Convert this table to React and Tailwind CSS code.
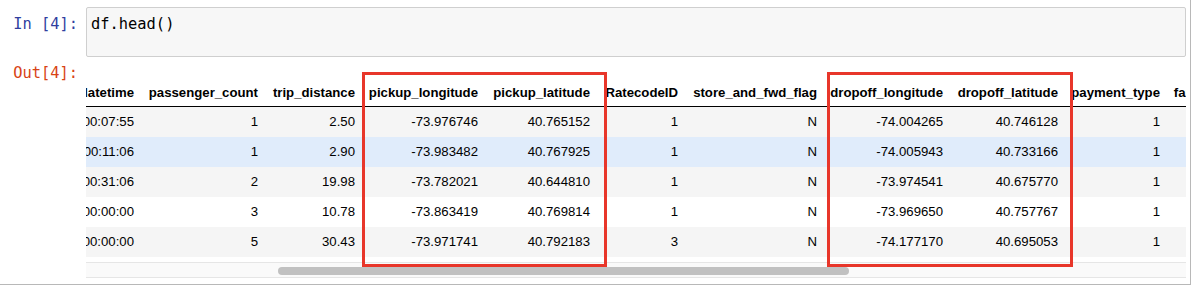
import React from "react";

const headers = [
  "tpep_dropoff_datetime",
  "passenger_count",
  "trip_distance",
  "pickup_longitude",
  "pickup_latitude",
  "RatecodeID",
  "store_and_fwd_flag",
  "dropoff_longitude",
  "dropoff_latitude",
  "payment_type",
  "fare_amount",
];

const rows = [
  ["2016-03-01 00:07:55", "1", "2.50", "-73.976746", "40.765152", "1", "N", "-74.004265", "40.746128", "1", "9.0"],
  ["2016-03-01 00:11:06", "1", "2.90", "-73.983482", "40.767925", "1", "N", "-74.005943", "40.733166", "1", "11.0"],
  ["2016-03-01 00:31:06", "2", "19.98", "-73.782021", "40.644810", "1", "N", "-73.974541", "40.675770", "1", "54.5"],
  ["2016-03-01 00:00:00", "3", "10.78", "-73.863419", "40.769814", "1", "N", "-73.969650", "40.757767", "1", "31.5"],
  ["2016-03-01 00:00:00", "5", "30.43", "-73.971741", "40.792183", "3", "N", "-74.177170", "40.695053", "1", "98.0"],
];

const rowBg = ["bg-[#f5f5f5]", "bg-[#e0ecfb]", "bg-[#f5f5f5]", "bg-white", "bg-[#f5f5f5]"];

const gridCols =
  "grid grid-cols-[55px_124px_97px_123px_112px_88px_139px_126px_115px_102px_93px]";

const mono = { fontFamily: '"DejaVu Sans Mono", "Liberation Mono", monospace' };

export default function App() {
  return (
    <div className="w-[1196px] h-[290px] bg-white overflow-hidden">
      <div className="relative w-[1191px] pt-[7px] pb-[6px] pr-[4px] border-r border-b border-[#b8b8b8]">
        {/* Input cell */}
        <div className="flex">
          <div
            className="w-[86px] shrink-0 pr-[8px] pt-[8px] text-right text-[15.4px] leading-[18px] text-[#303f9f]"
            style={mono}
          >
            In&nbsp;[4]:
          </div>
          <div
            className="w-[1100px] h-[50px] border border-[#cfcfcf] rounded-[2px] bg-[#f7f7f7] pl-[4px] pt-[7px] text-[15.4px] leading-[18px] text-black"
            style={mono}
          >
            df.head()
          </div>
        </div>

        {/* Output cell */}
        <div className="flex mt-[7px]">
          <div
            className="w-[86px] shrink-0 pr-[8px] text-right text-[15.4px] leading-[18px] text-[#d84315]"
            style={mono}
          >
            Out[4]:
          </div>
          <div
            className="w-[1100px] pt-[8px] text-[13.2px] text-black"
            style={{ fontFamily: '"Liberation Sans", Arial, Helvetica, sans-serif' }}
          >
            <div className="w-[1100px] overflow-hidden">
              <div className={`${gridCols} h-[35px] border-b border-black w-max`}>
                {headers.map((h) => (
                  <div
                    key={h}
                    className="flex justify-end items-end overflow-hidden whitespace-nowrap pl-[6px] pr-[7px] pb-[5px] font-bold leading-[16px]"
                  >
                    <span>{h}</span>
                  </div>
                ))}
              </div>
              {rows.map((r, i) => (
                <div key={i} className={`${gridCols} h-[30px] w-max ${rowBg[i]}`}>
                  {r.map((c, j) => (
                    <div
                      key={j}
                      className="flex justify-end items-center overflow-hidden whitespace-nowrap pl-[6px] pr-[7px] leading-[16px]"
                    >
                      <span>{c}</span>
                    </div>
                  ))}
                </div>
              ))}
            </div>
            {/* horizontal scrollbar */}
            <div className="mt-[5px] h-[16px] w-[1100px] border-y border-[#e6e6e6] bg-[#fafafa]">
              <div className="ml-[192px] mt-[4px] h-[8px] w-[571px] rounded-full bg-[#c1c1c1]" />
            </div>
          </div>
        </div>

        {/* Red highlight boxes */}
        <div className="absolute left-[362px] top-[72px] w-[245px] h-[195px] border-[3px] border-[#e8362a]" />
        <div className="absolute left-[827px] top-[72px] w-[246px] h-[195px] border-[3px] border-[#e8362a]" />
      </div>
    </div>
  );
}
